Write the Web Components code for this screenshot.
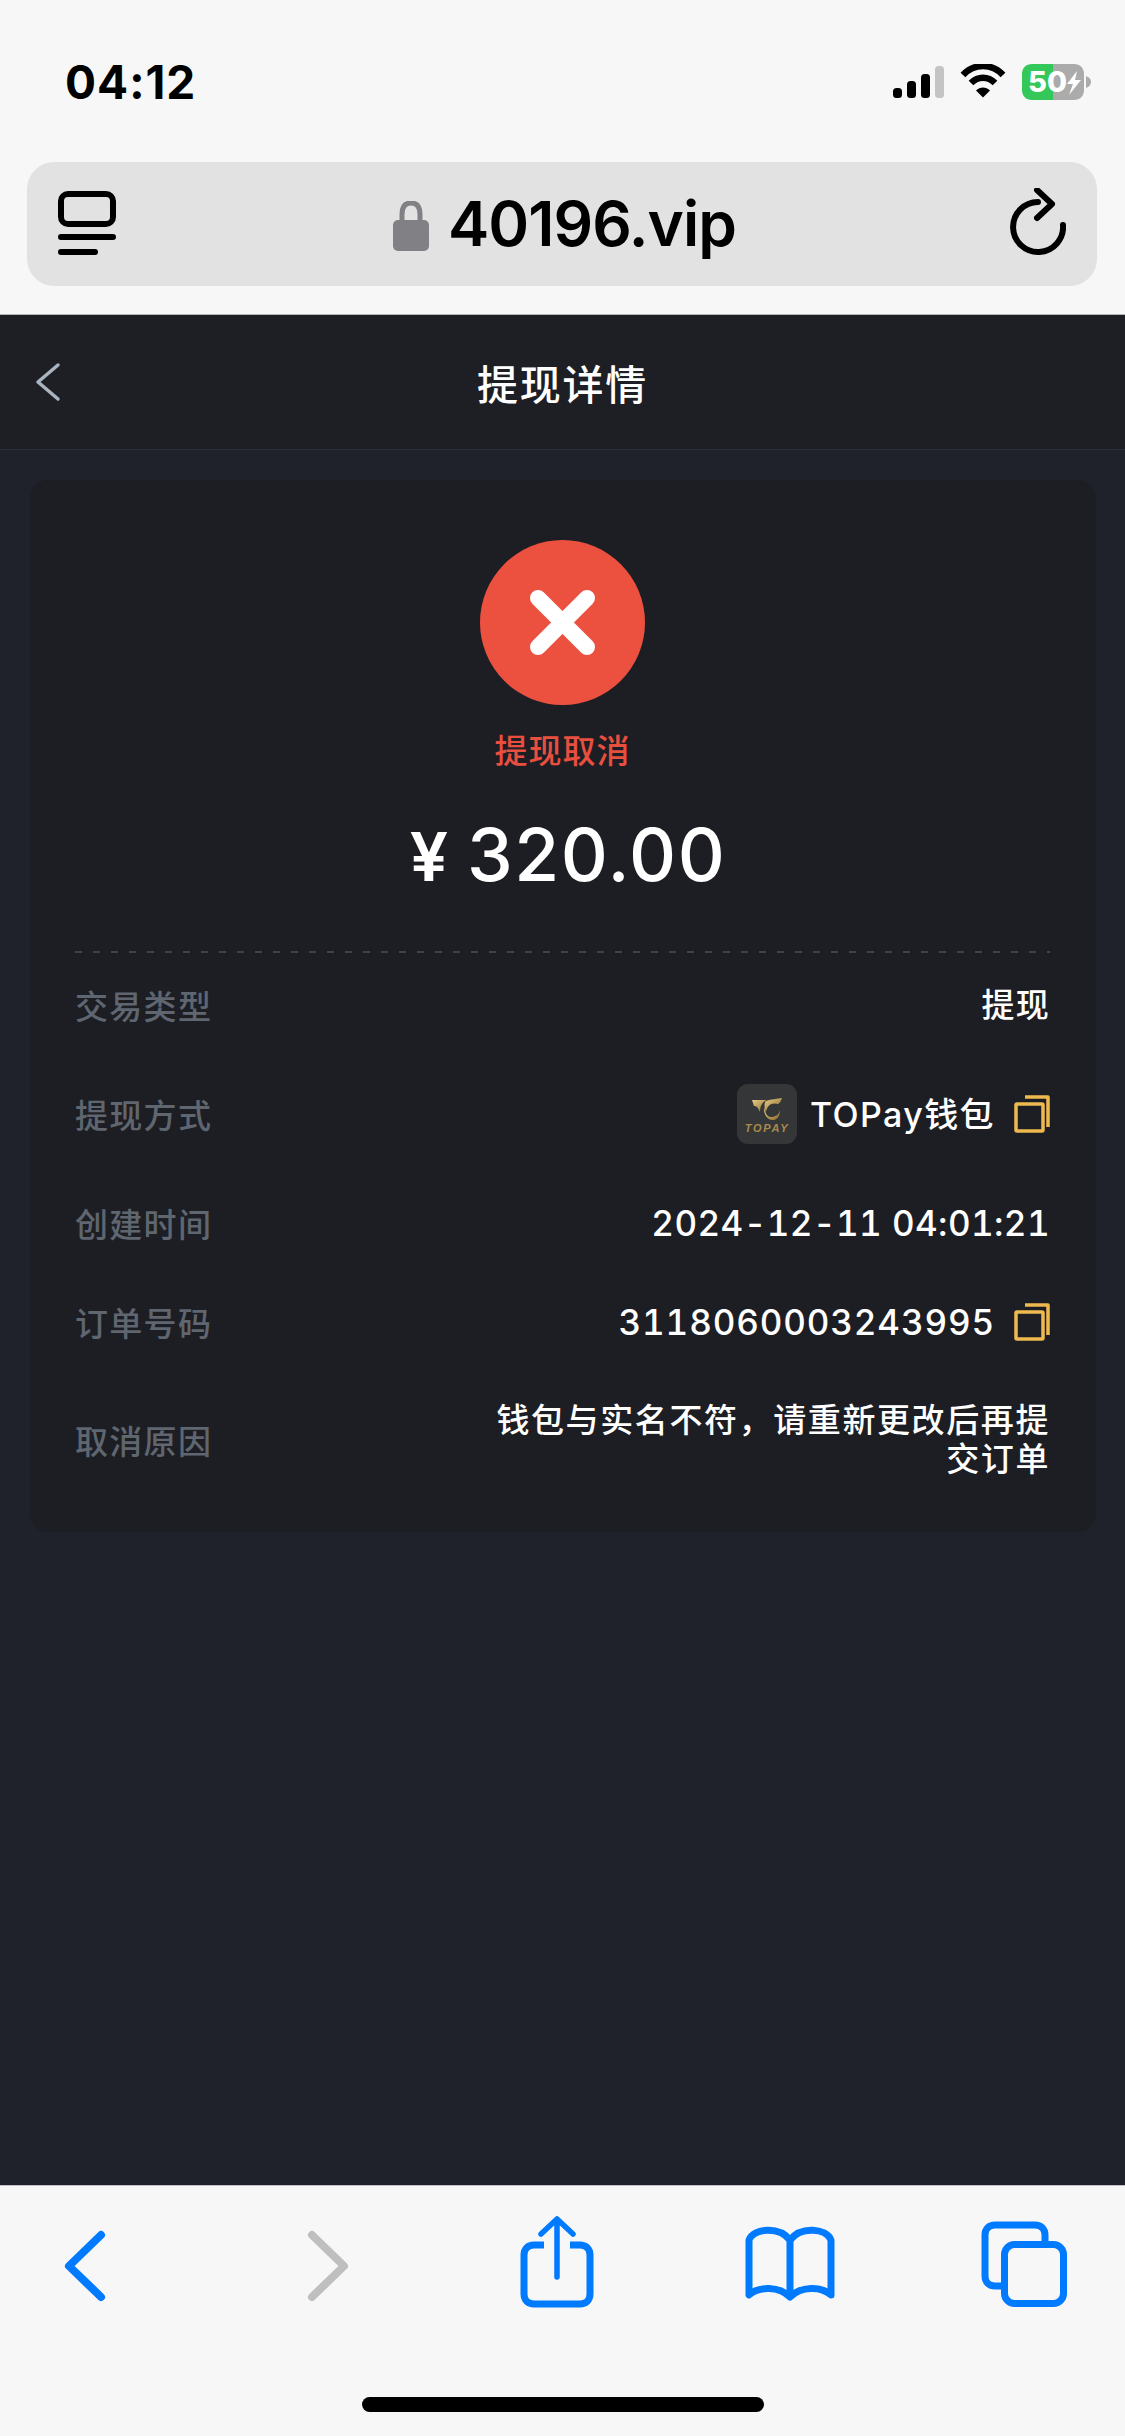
<!DOCTYPE html>
<html lang="zh-CN">
<head>
<meta charset="utf-8">
<title>提现详情</title>
<style>
html, body { margin: 0; padding: 0; height: 2436px; background: #1f222b; }
body { font-family: Inter, "Noto Sans CJK SC", sans-serif; }
app-page { height: 2436px; }
</style>
</head>
<body>
<app-page>
    <safari-top slot="top"></safari-top>
    <app-header title="提现详情" slot="header"></app-header>
    <withdraw-card slot="main" status="提现取消" amount="320.00">
        <detail-row label="交易类型"><span>提现</span></detail-row>
        <detail-row label="提现方式"><topay-logo></topay-logo><span class="wallet">TOPay钱包</span><copy-icon></copy-icon></detail-row>
        <detail-row label="创建时间"><span class="num date">2024-12-11 04:01:21</span></detail-row>
        <detail-row label="订单号码"><span class="num">3118060003243995</span><copy-icon></copy-icon></detail-row>
        <detail-row label="取消原因"><span class="reason">钱包与实名不符&#xFF0C;请重新更改后再提交订单</span></detail-row>
    </withdraw-card>
    <safari-toolbar slot="bottom"></safari-toolbar>
</app-page>
<script>
class AppPage extends HTMLElement {
    constructor() {
        super()
        this.attachShadow({ mode: 'open' })
        this.shadowRoot.innerHTML = `
            <style>
                :host { display: flex; flex-direction: column; }
                main { flex: 1; padding: 30px 29px 0 30px; }
            </style>
            <slot name="top"></slot>
            <slot name="header"></slot>
            <main><slot name="main"></slot></main>
            <slot name="bottom"></slot>
        `
    }
}

class SafariTop extends HTMLElement {
    constructor() {
        super()
        this.attachShadow({ mode: 'open' })
        this.shadowRoot.innerHTML = `
            <style>
                :host {
                    display: block;
                    height: 315px;
                    box-sizing: border-box;
                    background: #f7f7f7;
                    border-bottom: 1px solid #b4b4b4;
                    color: #000;
                    font-family: Inter, sans-serif;
                }
                .status {
                    height: 162px;
                    box-sizing: border-box;
                    padding: 64px 34px 0 65px;
                    display: flex;
                    justify-content: space-between;
                    align-items: flex-start;
                }
                .time { font-size: 46px; font-weight: 700; line-height: 36px; letter-spacing: 1px; }
                .icons { display: flex; align-items: flex-start; gap: 16px; }
                .battery { position: relative; display: block; width: 69px; height: 36px; }
                .battery b {
                    position: absolute;
                    left: 6px;
                    top: 0;
                    font-size: 29px;
                    line-height: 36px;
                    font-weight: 800;
                    color: #fff;
                }
                .pill {
                    height: 124px;
                    margin: 0 28px 0 27px;
                    border-radius: 27px;
                    background: #e2e2e2;
                    display: flex;
                    align-items: center;
                    justify-content: space-between;
                    padding: 0 31px 0 31px;
                }
                .addr { display: flex; align-items: center; gap: 19px; margin-left: 3px; font-size: 62px; line-height: 70px; letter-spacing: -1px; font-weight: 600; }
                svg { display: block; }
            </style>
            <div class="status">
                <span class="time">04:12</span>
                <div class="icons">
                    <svg width="51" height="34" viewBox="0 0 51 34" style="margin-top:2px">
                        <rect x="0" y="22" width="9" height="10" rx="3.5"/>
                        <rect x="14" y="15" width="9" height="17" rx="3.5"/>
                        <rect x="28" y="8" width="9" height="24" rx="3.5"/>
                        <rect x="42" y="0" width="9" height="32" rx="3.5" fill="#c4c4c4"/>
                    </svg>
                    <svg width="46" height="34" viewBox="0 0 46 34">
                        <path d="M3 11C14-1 32-1 43 11" fill="none" stroke="#000" stroke-width="6.5" stroke-linecap="butt"/>
                        <path d="M11 19C18 12 28 12 35 19" fill="none" stroke="#000" stroke-width="6.5"/>
                        <path d="M16 26.500C20 22.500 26 22.500 30 26.500L23 33.500Z"/>
                    </svg>
                    <span class="battery">
                        <svg width="69" height="36" viewBox="0 0 69 36">
                            <path d="M10 0H31V36H10C4 36 0 32 0 26V10C0 4 4 0 10 0Z" fill="#34c759"/>
                            <path d="M31 0H52C58 0 62 4 62 10V26C62 32 58 36 52 36H31Z" fill="#ababab"/>
                            <path d="M64 12C67 13 69 15 69 18C69 21 67 23 64 24Z" fill="#ababab"/>
                            <path d="M55 7L45 20H51L47 31L59 16H53Z" fill="#fff"/>
                        </svg>
                        <b>50</b>
                    </span>
                </div>
            </div>
            <div class="pill">
                <svg width="58" height="66" viewBox="0 0 58 66">
                    <rect x="3" y="3" width="52" height="30" rx="7" fill="none" stroke="#000" stroke-width="6"/>
                    <path d="M3 46H55M3 61H37" stroke="#000" stroke-width="6" stroke-linecap="round"/>
                </svg>
                <div class="addr">
                    <svg width="36" height="50" viewBox="0 0 36 50" style="margin-top:4px">
                        <path d="M9 22V13C9 6 12 2 18 2C24 2 27 6 27 13V22" fill="none" stroke="#808085" stroke-width="5"/>
                        <rect x="0" y="19" width="36" height="31" rx="5" fill="#808085"/>
                    </svg>
                    <span>40196.vip</span>
                </div>
                <svg width="56" height="68" viewBox="0 0 56 68" style="margin-top:-4px">
                    <path d="M53 37A25 25 0 1 1 28 14" fill="none" stroke="#000" stroke-width="6" stroke-linecap="round"/>
                    <path d="M27 2L42 16L27 30" fill="none" stroke="#000" stroke-width="6" stroke-linecap="round" stroke-linejoin="round"/>
                </svg>
            </div>
        `
    }
}

class AppHeader extends HTMLElement {
    constructor() {
        super()
        this.attachShadow({ mode: 'open' })
        this.shadowRoot.innerHTML = `
            <style>
                :host {
                    display: block;
                    height: 135px;
                    box-sizing: border-box;
                    background: #1e1f24;
                    border-bottom: 1px solid #2c2f37;
                }
                .bar {
                    height: 134px;
                    display: grid;
                    grid-template-columns: 1fr auto 1fr;
                    align-items: center;
                    padding-left: 34px;
                }
                h1 {
                    margin: 0;
                    font-size: 41px;
                    line-height: 50px;
                    font-weight: 500;
                    color: #fff;
                    letter-spacing: 1.800px;
                    font-family: "Noto Sans CJK SC", sans-serif;
                    transform: translateX(-17px);
                }
                svg { display: block; }
            </style>
            <div class="bar">
                <svg width="28" height="40" viewBox="0 0 28 40">
                    <path d="M24 3L4 20L24 37" fill="none" stroke="#a9b4c0" stroke-width="3.500" stroke-linecap="round" stroke-linejoin="round"/>
                </svg>
                <h1></h1>
            </div>
        `
        this.shadowRoot.querySelector('h1').textContent = this.getAttribute('title') || ''
    }
}

class WithdrawCard extends HTMLElement {
    constructor() {
        super()
        this.attachShadow({ mode: 'open' })
        this.shadowRoot.innerHTML = `
            <style>
                :host {
                    display: block;
                    background: #1d1e24;
                    border-radius: 18px;
                    height: 1052px;
                    box-sizing: border-box;
                    padding: 60px 46px 0 45px;
                    font-family: Inter, "Noto Sans CJK SC", sans-serif;
                }
                .head { display: flex; flex-direction: column; align-items: center; height: 411px; box-sizing: border-box; }
                .status {
                    margin-top: 22px;
                    font-size: 33px;
                    line-height: 44px;
                    font-weight: 500;
                    letter-spacing: 1px;
                    color: #e84f3f;
                    font-family: "Noto Sans CJK SC", sans-serif;
                }
                .amount {
                    margin: 40px 0 0 11px;
                    display: flex;
                    align-items: baseline;
                    gap: 19px;
                    color: #fff;
                    line-height: 88px;
                    height: 88px;
                }
                .yen { font-size: 68px; font-weight: 600; font-family: Inter, sans-serif; }
                .num { font-size: 73px; font-weight: 500; letter-spacing: 1.500px; }
                .line {
                    height: 2px;
                    background: repeating-linear-gradient(90deg, #3a4350 0 7px, transparent 7px 18px);
                }
                .rows { display: flex; flex-direction: column; gap: 59px; padding-top: 32px; }
                svg { display: block; }
            </style>
            <div class="head">
                <svg width="165" height="165" viewBox="0 0 165 165">
                    <circle cx="82.500" cy="82.500" r="82.500" fill="#ec5140"/>
                    <path d="M58 58L107 107M107 58L58 107" stroke="#fff" stroke-width="16" stroke-linecap="round"/>
                </svg>
                <div class="status"></div>
                <div class="amount"><span class="yen">¥</span><span class="num"></span></div>
            </div>
            <div class="line"></div>
            <div class="rows"><slot></slot></div>
        `
        this.shadowRoot.querySelector('.status').textContent = this.getAttribute('status')
        this.shadowRoot.querySelector('.num').textContent = this.getAttribute('amount')
    }
}

class DetailRow extends HTMLElement {
    constructor() {
        super()
        this.attachShadow({ mode: 'open' })
        this.shadowRoot.innerHTML = `
            <style>
                :host {
                    display: flex;
                    justify-content: space-between;
                    align-items: center;
                    min-height: 40px;
                    font-size: 33px;
                    line-height: 39px;
                    letter-spacing: 1.300px;
                    color: #fff;
                    font-weight: 500;
                    font-family: Inter, "Noto Sans CJK SC", sans-serif;
                }
                .label { color: #5f6670; flex: none; font-family: "Noto Sans CJK SC", sans-serif; font-weight: 500; }
                .value {
                    display: flex;
                    align-items: center;
                    justify-content: flex-end;
                    gap: 19px;
                    text-align: right;
                    max-width: 570px;
                }
                ::slotted(.num) { font-size: 35px; letter-spacing: .85px; font-variant-numeric: tabular-nums; }
                ::slotted(.date) { letter-spacing: .4px; }
                ::slotted(.wallet) { font-size: 34px; letter-spacing: 1.400px; }
                ::slotted(.reason) { display: block; width: 558px; letter-spacing: 1.600px; }
            </style>
            <span class="label"></span>
            <div class="value"><slot></slot></div>
        `
        this.shadowRoot.querySelector('.label').textContent = this.getAttribute('label')
    }
}

class CopyIcon extends HTMLElement {
    constructor() {
        super()
        this.attachShadow({ mode: 'open' })
        this.shadowRoot.innerHTML = `
            <style>
                :host { display: block; width: 36px; height: 38px; flex: none; }
                svg { display: block; }
            </style>
            <svg width="36" height="38" viewBox="0 0 36 38" fill="none" stroke="#eeb94f" stroke-width="3.500" stroke-linejoin="round">
                <rect x="2" y="9" width="27" height="27" rx="1"/>
                <path d="M11 2H34V32"/>
            </svg>
        `
    }
}

class TopayLogo extends HTMLElement {
    constructor() {
        super()
        this.attachShadow({ mode: 'open' })
        this.shadowRoot.innerHTML = `
            <style>
                :host {
                    display: flex;
                    flex-direction: column;
                    align-items: center;
                    box-sizing: border-box;
                    width: 60px;
                    height: 60px;
                    margin-right: -6px;
                    padding-top: 14px;
                    background: #353638;
                    border-radius: 11px;
                    flex: none;
                }
                svg { display: block; }
                span {
                    font: italic 700 11px/12px "Liberation Sans", sans-serif;
                    letter-spacing: 1.700px;
                    color: #a98a4c;
                    margin-top: 1px;
                }
            </style>
            <svg width="30" height="23" viewBox="0 0 30 23">
                <defs>
                    <linearGradient id="g" x1="0" y1="0" x2="1" y2="1">
                        <stop offset="0" stop-color="#e8cc85"/>
                        <stop offset="1" stop-color="#8a6a2c"/>
                    </linearGradient>
                </defs>
                <path d="M0 2H15C10 4 8 8 8 14C6 10 5 8 2 8Z" fill="url(#g)"/>
                <path d="M14 3C19 1 25 1 30 0C29 3 28 5 26 6C20 4 15 7 14 14C12 9 12 5 14 3Z" fill="url(#g)"/>
                <path d="M12 9C11 15 15 23 22 22C26 21 28 17 28 12C27 17 23 19 19 19C15 19 13 14 12 9Z" fill="url(#g)"/>
            </svg>
            <span>TOPAY</span>
        `
    }
}

class SafariToolbar extends HTMLElement {
    constructor() {
        super()
        this.attachShadow({ mode: 'open' })
        this.shadowRoot.innerHTML = `
            <style>
                :host {
                    display: block;
                    height: 251px;
                    box-sizing: border-box;
                    background: #f7f7f7;
                    border-top: 1px solid #c2c2c2;
                }
                .icons {
                    height: 211px;
                    box-sizing: border-box;
                    display: flex;
                    align-items: flex-start;
                    padding: 30px 0 0 64px;
                }
                .home { width: 402px; height: 15px; border-radius: 8px; background: #000; margin: 0 auto; }
                svg { display: block; flex: none; }
            </style>
            <div class="icons">
                <svg width="42" height="72" viewBox="0 0 42 72" style="margin-top:14px">
                    <path d="M37 5L5 36L37 67" fill="none" stroke="#007aff" stroke-width="8" stroke-linecap="round" stroke-linejoin="round"/>
                </svg>
                <svg width="42" height="72" viewBox="0 0 42 72" style="margin:14px 0 0 201px">
                    <path d="M5 5L37 36L5 67" fill="none" stroke="#bfbfbf" stroke-width="8" stroke-linecap="round" stroke-linejoin="round"/>
                </svg>
                <svg width="74" height="94" viewBox="0 0 74 94" style="margin:0 0 0 171px">
                    <path d="M24 29H14C8 29 4 33 4 39V78C4 84 8 88 14 88H60C66 88 70 84 70 78V39C70 33 66 29 60 29H50" fill="none" stroke="#007aff" stroke-width="7"/>
                    <path d="M37 61V3M21 18L37 3L53 18" fill="none" stroke="#007aff" stroke-width="5.500" stroke-linecap="round" stroke-linejoin="round"/>
                </svg>
                <svg width="90" height="76" viewBox="0 0 90 76" style="margin:10px 0 0 151px">
                    <path d="M4 14C9 2 34 0 45 14C56 0 81 2 86 14V69C76 60 56 60 45 71C34 60 14 60 4 69Z" fill="none" stroke="#007aff" stroke-width="7" stroke-linejoin="round"/>
                    <path d="M45 14V71" stroke="#007aff" stroke-width="7"/>
                </svg>
                <svg width="86" height="86" viewBox="0 0 86 86" style="margin:5px 0 0 146px">
                    <path d="M20 65H14C8 65 4 61 4 55V14C4 8 8 4 14 4H54C60 4 64 8 64 14V24" fill="none" stroke="#007aff" stroke-width="7"/>
                    <rect x="23.500" y="23.500" width="59" height="59" rx="10" fill="none" stroke="#007aff" stroke-width="7"/>
                </svg>
            </div>
            <div class="home"></div>
        `
    }
}

customElements.define('app-page', AppPage)
customElements.define('safari-top', SafariTop)
customElements.define('app-header', AppHeader)
customElements.define('withdraw-card', WithdrawCard)
customElements.define('detail-row', DetailRow)
customElements.define('copy-icon', CopyIcon)
customElements.define('topay-logo', TopayLogo)
customElements.define('safari-toolbar', SafariToolbar)
</script>
</body>
</html>
